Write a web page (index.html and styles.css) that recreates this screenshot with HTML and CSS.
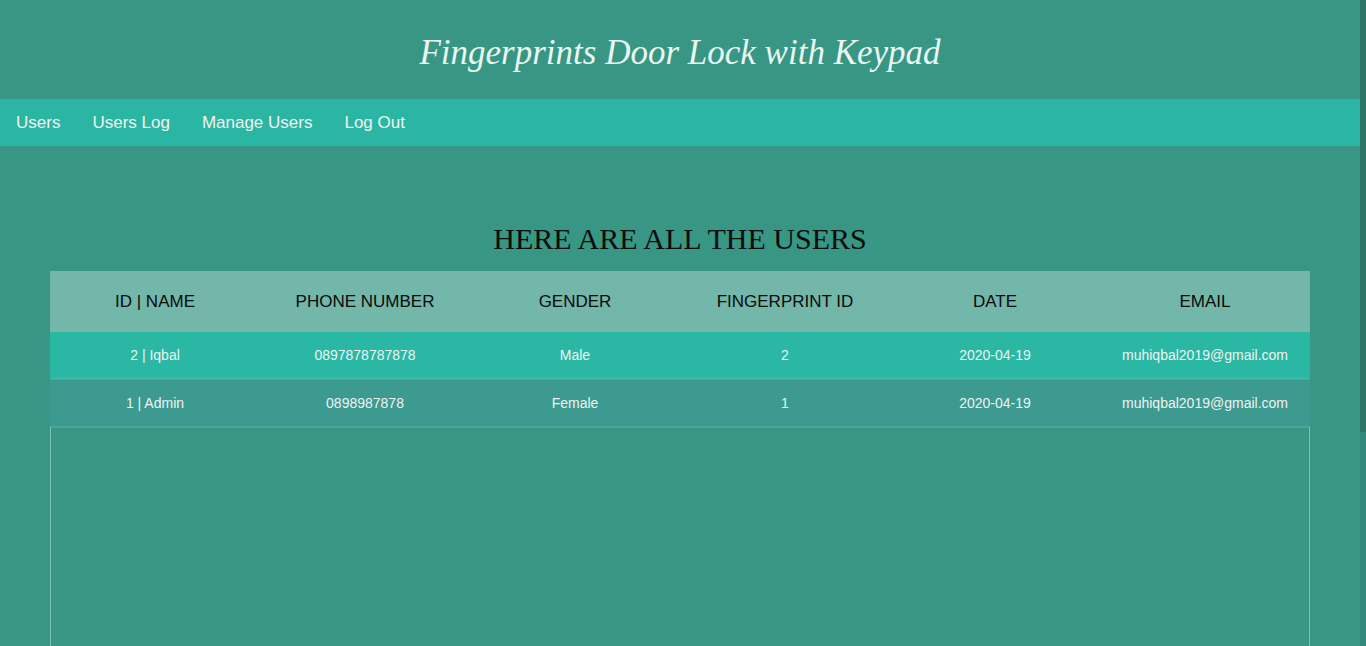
FILE: index.html
```html
<!DOCTYPE html>
<html lang="en">
<head>
<meta charset="utf-8">
<title>Users</title>
<link rel="stylesheet" href="styles.css">
</head>
<body>
<header class="top">
  <h1 class="title">Fingerprints Door Lock with Keypad</h1>
</header>
<nav class="nav">
  <a href="#" class="nav-link">Users</a>
  <a href="#" class="nav-link">Users Log</a>
  <a href="#" class="nav-link">Manage Users</a>
  <a href="#" class="nav-link">Log Out</a>
</nav>
<main class="main">
  <h2 class="heading">HERE ARE ALL THE USERS</h2>
  <div class="table-wrap">
    <table class="users">
      <thead>
        <tr>
          <th>ID | NAME</th>
          <th>PHONE NUMBER</th>
          <th>GENDER</th>
          <th>FINGERPRINT ID</th>
          <th>DATE</th>
          <th>EMAIL</th>
        </tr>
      </thead>
      <tbody>
        <tr class="row-a">
          <td>2 | Iqbal</td>
          <td>0897878787878</td>
          <td>Male</td>
          <td>2</td>
          <td>2020-04-19</td>
          <td>muhiqbal2019@gmail.com</td>
        </tr>
        <tr class="row-b">
          <td>1 | Admin</td>
          <td>0898987878</td>
          <td>Female</td>
          <td>1</td>
          <td>2020-04-19</td>
          <td>muhiqbal2019@gmail.com</td>
        </tr>
      </tbody>
    </table>
  </div>
</main>
<div class="scrollbar"><div class="scrollbar-thumb"></div></div>
</body>
</html>
```
FILE: styles.css
```css
html {
  background: #379684;
}
body {
  margin: 0 6px 0 0;
  background: #379684;
  font-family: "Liberation Sans", Arial, sans-serif;
}
.scrollbar {
  position: fixed;
  top: 0;
  right: 0;
  width: 6px;
  height: 100%;
  background: #33897b;
}
.scrollbar-thumb {
  height: 432px;
  background: #2e7466;
}
.top {
  height: 99px;
  display: flex;
  align-items: center;
  justify-content: center;
}
.title {
  margin: 0;
  padding-top: 6px;
  font-family: "Liberation Serif", "Times New Roman", serif;
  font-style: italic;
  font-weight: normal;
  font-size: 35px;
  color: #eaf6f1;
}
.nav {
  height: 47px;
  background: #2bb6a3;
  display: flex;
  align-items: center;
}
.nav-link {
  padding: 0 16px;
  color: #eef3f0;
  text-decoration: none;
  font-size: 17px;
}
.main {
  padding-top: 76px;
}
.heading {
  margin: 0 0 15px;
  text-align: center;
  font-family: "Liberation Serif", "Times New Roman", serif;
  font-weight: normal;
  font-size: 30px;
  line-height: 34px;
  color: #0b0b0b;
}
.table-wrap {
  margin: 0 50px;
  height: 375px;
  border-left: 1px solid #7dbfb4;
  border-right: 1px solid #7dbfb4;
}
.users {
  width: calc(100% + 2px);
  margin-left: -1px;
  border-collapse: collapse;
  table-layout: fixed;
}
.users th {
  height: 61px;
  padding: 0;
  background: #73b6aa;
  color: #0a0a0a;
  font-weight: normal;
  font-size: 17px;
  text-align: center;
}
.users td {
  height: 46px;
  padding: 0;
  text-align: center;
  font-size: 14px;
  color: #eef3f0;
  border-bottom: 2px solid rgba(255, 255, 255, 0.1);
}
.row-a td {
  background: #2ab7a4;
}
.row-b td {
  background: #3d9a90;
}
```
